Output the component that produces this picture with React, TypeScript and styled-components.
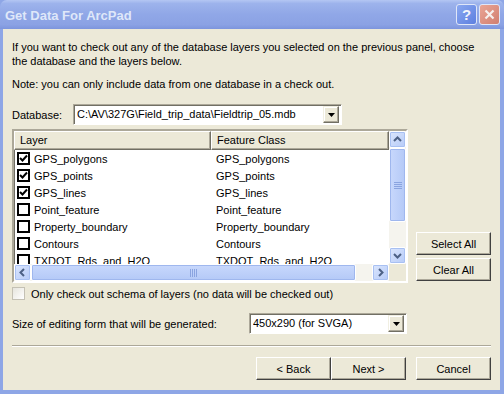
import React from 'react';
import styled, { createGlobalStyle } from 'styled-components';

const GlobalStyle = createGlobalStyle`
  html, body {
    margin: 0;
    padding: 0;
    background: #ece9d8;
  }
  body {
    font-family: "Liberation Sans", Arial, sans-serif;
    font-size: 11px;
    color: #000;
  }
`;

const Window = styled.div`
  width: 504px;
  height: 394px;
  box-sizing: border-box;
  display: flex;
  flex-direction: column;
  background: #8ea6e6;
  overflow: hidden;
`;

const TitleBar = styled.div`
  height: 29px;
  flex: none;
  display: flex;
  align-items: center;
  padding: 0 4px 0 5px;
  background: linear-gradient(180deg, #b4c6f3 0%, #9db3ec 12%, #90a7e7 50%, #8ba2e4 85%, #7d95dd 100%);
  border-radius: 7px 7px 0 0;
`;

const Title = styled.div`
  flex: 1;
  font-family: "Liberation Sans", Arial, sans-serif;
  font-weight: bold;
  font-size: 13px;
  color: #dfe7f9;
  padding-top: 2px;
`;

const CaptionButton = styled.div<{ $close?: boolean }>`
  width: 21px;
  height: 21px;
  box-sizing: border-box;
  margin-left: 2px;
  border: 1px solid #dfe6f8;
  border-radius: 3px;
  background: ${p => (p.$close ? 'linear-gradient(135deg, #eaa595, #d17f70)' : 'linear-gradient(135deg, #8aa8f0, #5d7fe0)')};
  display: flex;
  align-items: center;
  justify-content: center;
  color: #f2f4fb;
  font-weight: bold;
  font-size: 15px;
`;

const Body = styled.div`
  flex: 1;
  margin: 0 4px 4px 3px;
  background: #ece9d8;
  padding: 11px 9px 0 9px;
  display: flex;
  flex-direction: column;
`;

const Para = styled.p`
  margin: 0;
  line-height: 14px;
`;

const Note = styled(Para)`
  margin-top: 9px;
`;

const Row = styled.div<{ $top: number }>`
  display: flex;
  align-items: center;
  margin-top: ${p => p.$top}px;
`;

const Label = styled.span<{ $w: number }>`
  width: ${p => p.$w}px;
  flex: none;
`;

const Combo = styled.div<{ $w: number }>`
  width: ${p => p.$w}px;
  height: 21px;
  box-sizing: border-box;
  display: flex;
  background: #fff;
  border: 1px solid;
  border-color: #aca899 #fff #fff #aca899;
  box-shadow: inset 1px 1px 0 #716f64;
  padding: 2px 2px 2px 3px;
`;

const ComboText = styled.div`
  flex: 1;
  line-height: 15px;
  white-space: nowrap;
  overflow: hidden;
`;

const ComboButton = styled.div`
  width: 16px;
  height: 17px;
  margin-top: -1px;
  box-sizing: border-box;
  background: #ece9d8;
  border: 1px solid;
  border-color: #f1efe2 #716f64 #716f64 #f1efe2;
  box-shadow: inset -1px -1px 0 #aca899, inset 1px 1px 0 #fff;
  display: flex;
  align-items: center;
  justify-content: center;
`;

const ListArea = styled.div`
  display: flex;
  align-items: flex-end;
  gap: 8px;
  margin-top: 4px;
`;

const ListBox = styled.div`
  width: 396px;
  height: 154px;
  box-sizing: border-box;
  border: 2px solid;
  border-color: #aca899 #fff #fff #aca899;
  box-shadow: inset 1px 1px 0 #716f64, inset -1px -1px 0 #f1efe2;
  background: #fff;
  display: grid;
  grid-template-columns: 375px 17px;
  grid-template-rows: 133px 17px;
  overflow: hidden;
`;

const ListMain = styled.div`
  overflow: hidden;
`;

const Header = styled.div`
  display: flex;
  height: 19px;
`;

const HeaderCell = styled.div<{ $w: number }>`
  width: ${p => p.$w}px;
  flex: none;
  box-sizing: border-box;
  background: #ece9d8;
  border: 1px solid;
  border-color: #fff #716f64 #716f64 #fff;
  box-shadow: inset -1px -1px 0 #aca899;
  padding-left: 5px;
  line-height: 16px;
`;

const ListRow = styled.div`
  display: flex;
  height: 17px;
  align-items: center;
`;

const Cell = styled.div<{ $w: number; $pad?: number }>`
  width: ${p => p.$w}px;
  flex: none;
  box-sizing: border-box;
  padding-left: ${p => p.$pad ?? 0}px;
  display: flex;
  align-items: center;
  white-space: nowrap;
`;

const Check = styled.div`
  width: 13px;
  height: 13px;
  box-sizing: border-box;
  border: 2px solid #000;
  margin: 0 4px 0 3px;
  background: #fff;
  display: flex;
  align-items: center;
  justify-content: center;
`;

const SchemaCheck = styled.div`
  width: 13px;
  height: 13px;
  box-sizing: border-box;
  border: 1px solid #c4c1b4;
  background: linear-gradient(135deg, #e6e5dd, #ffffff);
  margin-right: 6px;
`;

const VScroll = styled.div`
  display: flex;
  flex-direction: column;
  background: #f5f4ee;
`;

const HScroll = styled.div`
  display: flex;
  background: #f5f4ee;
`;

const Corner = styled.div`
  background: #ece9d8;
`;

const ScrollBtn = styled.div`
  width: 17px;
  height: 17px;
  flex: none;
  box-sizing: border-box;
  border: 1px solid #fff;
  border-radius: 2px;
  background: linear-gradient(135deg, #dbe6fd, #b6cbf8);
  box-shadow: inset 0 0 0 1px #a8c0f2;
  display: flex;
  align-items: center;
  justify-content: center;
`;

const Thumb = styled.div<{ $h?: boolean; $size: number }>`
  flex: none;
  ${p => (p.$h ? `width: ${p.$size}px;` : `height: ${p.$size}px;`)}
  box-sizing: border-box;
  border: 1px solid #fff;
  border-radius: 2px;
  background: ${p => (p.$h ? 'linear-gradient(180deg, #c8d8fc, #b4c9f7)' : 'linear-gradient(90deg, #c8d8fc, #b4c9f7)')};
  box-shadow: inset 0 0 0 1px #9fb7ee;
  display: flex;
  align-items: center;
  justify-content: center;
`;

const ScrollGap = styled.div`
  flex: 1;
`;

const SideButtons = styled.div`
  display: flex;
  flex-direction: column;
  gap: 3px;
  margin-bottom: 2px;
`;

const Button = styled.button`
  width: 75px;
  height: 23px;
  box-sizing: border-box;
  background: #ece9d8;
  border: 1px solid;
  border-color: #fff #404040 #404040 #fff;
  box-shadow: inset -1px -1px 0 #aca899;
  font-family: "Liberation Sans", Arial, sans-serif;
  font-size: 11px;
  color: #000;
  padding: 0;
  margin: 0;
`;

const Separator = styled.div`
  height: 0;
  border-top: 1px solid #aca899;
  border-bottom: 1px solid #fff;
  margin-top: 11px;
`;

const Footer = styled.div`
  display: flex;
  justify-content: flex-end;
  margin-top: 10px;
`;

const FooterGap = styled.div`
  width: 10px;
`;

const Arrow = ({ dir, color = '#4d6185' }: { dir: 'up' | 'down' | 'left' | 'right'; color?: string }) => {
  const pts = {
    up: '1,6 4.5,2.5 8,6',
    down: '1,3 4.5,6.5 8,3',
    left: '6,1 2.5,4.5 6,8',
    right: '3,1 6.5,4.5 3,8',
  }[dir];
  return (
    <svg width="9" height="9" viewBox="0 0 9 9">
      <polyline points={pts} fill="none" stroke={color} strokeWidth="2" />
    </svg>
  );
};

const DropArrow = () => (
  <svg width="7" height="4" viewBox="0 0 7 4">
    <polygon points="0,0 7,0 3.5,4" fill="#000" />
  </svg>
);

const Tick = () => (
  <svg width="9" height="9" viewBox="0 0 9 9">
    <polyline points="1,4 3.5,6.5 8,1.5" fill="none" stroke="#000" strokeWidth="2" />
  </svg>
);

const Grip = ({ horizontal }: { horizontal?: boolean }) => (
  <svg width={8} height={8} viewBox="0 0 8 8">
    {horizontal
      ? [0, 2, 4, 6].map(x => <line key={x} x1={x + 0.5} y1="0" x2={x + 0.5} y2="8" stroke="#8aa4e0" />)
      : [1, 3, 5, 7].map(y => <line key={y} x1="0" y1={y + 0.5} x2="8" y2={y + 0.5} stroke="#8aa4e0" />)}
  </svg>
);

const layers = [
  { name: 'GPS_polygons', checked: true },
  { name: 'GPS_points', checked: true },
  { name: 'GPS_lines', checked: true },
  { name: 'Point_feature', checked: false },
  { name: 'Property_boundary', checked: false },
  { name: 'Contours', checked: false },
  { name: 'TXDOT_Rds_and_H2O', checked: false },
];

export default function App() {
  return (
    <>
      <GlobalStyle />
      <Window>
        <TitleBar>
          <Title>Get Data For ArcPad</Title>
          <CaptionButton>?</CaptionButton>
          <CaptionButton $close>
            <svg width="11" height="11" viewBox="0 0 11 11">
              <path d="M1.5 1.5 L9.5 9.5 M9.5 1.5 L1.5 9.5" stroke="#f6f0ee" strokeWidth="2.2" />
            </svg>
          </CaptionButton>
        </TitleBar>
        <Body>
          <Para>
            If you want to check out any of the database layers you selected on the previous panel, choose
            <br />
            the database and the layers below.
          </Para>
          <Note>Note: you can only include data from one database in a check out.</Note>

          <Row $top={13}>
            <Label $w={61}>Database:</Label>
            <Combo $w={269}>
              <ComboText>C:\AV\327G\Field_trip_data\Fieldtrip_05.mdb</ComboText>
              <ComboButton>
                <DropArrow />
              </ComboButton>
            </Combo>
          </Row>

          <ListArea>
            <ListBox>
              <ListMain>
                <Header>
                  <HeaderCell $w={197}>Layer</HeaderCell>
                  <HeaderCell $w={178}>Feature Class</HeaderCell>
                </Header>
                {layers.map(l => (
                  <ListRow key={l.name}>
                    <Cell $w={197}>
                      <Check>{l.checked && <Tick />}</Check>
                      {l.name}
                    </Cell>
                    <Cell $w={178} $pad={5}>
                      {l.name}
                    </Cell>
                  </ListRow>
                ))}
              </ListMain>
              <VScroll>
                <ScrollBtn>
                  <Arrow dir="up" />
                </ScrollBtn>
                <Thumb $size={74}>
                  <Grip />
                </Thumb>
                <ScrollGap />
                <ScrollBtn>
                  <Arrow dir="down" />
                </ScrollBtn>
              </VScroll>
              <HScroll>
                <ScrollBtn>
                  <Arrow dir="left" />
                </ScrollBtn>
                <Thumb $h $size={325}>
                  <Grip horizontal />
                </Thumb>
                <ScrollGap />
                <ScrollBtn>
                  <Arrow dir="right" />
                </ScrollBtn>
              </HScroll>
              <Corner />
            </ListBox>
            <SideButtons>
              <Button>Select All</Button>
              <Button>Clear All</Button>
            </SideButtons>
          </ListArea>

          <Row $top={4}>
            <SchemaCheck />
            <span>Only check out schema of layers (no data will be checked out)</span>
          </Row>

          <Row $top={13}>
            <Label $w={237}>Size of editing form that will be generated:</Label>
            <Combo $w={158}>
              <ComboText>450x290 (for SVGA)</ComboText>
              <ComboButton>
                <DropArrow />
              </ComboButton>
            </Combo>
          </Row>

          <Separator />

          <Footer>
            <Button>&lt; Back</Button>
            <Button>Next &gt;</Button>
            <FooterGap />
            <Button>Cancel</Button>
          </Footer>
        </Body>
      </Window>
    </>
  );
}
